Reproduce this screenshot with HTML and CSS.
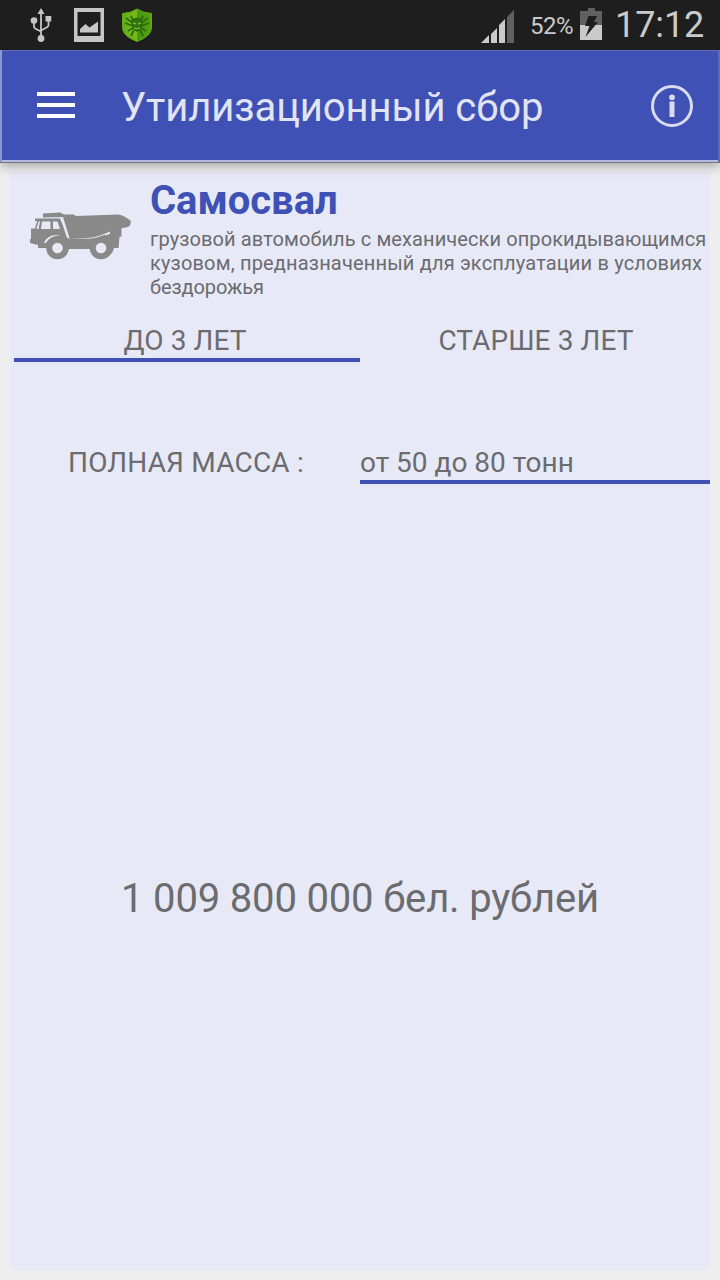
FILE: index.html
```html
<!DOCTYPE html>
<html lang="ru">
<head>
<meta charset="utf-8">
<title>Утилизационный сбор</title>
<link rel="stylesheet" href="styles.css">
</head>
<body>
<div class="screen">
  <header class="status">
    <div class="notifications">
      <svg width="22" height="34" viewBox="0 0 22 34" fill="#c6c6c6" stroke="#c6c6c6">
        <path d="M11 0l3.500 6h-7z" stroke="none"/>
        <path d="M11 4v27M4 13v5.500q0 1.500 1.500 2.300L11 23.500M18.500 11v6q0 1.500-1.500 2.300L11 22.500" fill="none" stroke-width="1.800"/>
        <circle cx="4" cy="12.500" r="3.300" stroke="none"/>
        <rect x="15.500" y="8" width="5.800" height="5.500" stroke="none"/>
        <circle cx="11" cy="30.500" r="3.400" stroke="none"/>
      </svg>
      <svg width="30" height="34" viewBox="0 0 30 34">
        <path fill="#c6c6c6" fill-rule="evenodd" d="M0 0h30v34H0zM3.500 4v24h23V4z"/>
        <path fill="#c6c6c6" d="M6 24.500V21l5.500-5 4 3.500 8.500-6v11z"/>
      </svg>
      <svg width="32" height="34" viewBox="0 0 32 34">
        <defs><linearGradient id="shield" x2="1"><stop stop-color="#5fae16"/><stop offset=".5" stop-color="#78bd18"/><stop offset=".52" stop-color="#459411"/><stop offset="1" stop-color="#54a413"/></linearGradient></defs>
        <path fill="url(#shield)" stroke="#61ad17" d="M16 1Q22 5 30.500 5.500v14q0 8.500-14.500 14Q1.500 28 1.500 19.500v-14Q10 5 16 1z"/>
        <g fill="none" stroke="#2d6a0c" stroke-width="1.700">
          <path d="M10 8l2 4M5 10l7 5M4 15l8 3M7 23l5-3M10 28l3-6M22 8l-2 4M27 10l-7 5M28 15l-8 3M25 23l-5-3M22 28l-3-6"/>
          <path d="M11 13q5-5 10 0l-1 7-4 3-4-3z" fill="#347510"/>
        </g>
        <path fill="none" stroke="#8dc73a" stroke-width="1.200" d="M12 15l3 1M20 15l-3 1M13 20q3 1.500 6 0"/>
      </svg>
    </div>
    <div class="system">
      <svg class="signal" width="34" height="33" viewBox="0 0 34 33">
        <path fill="#cacaca" d="M0 33l8-8v8zM10 24l6-6v15h-6zM18 15l6-6v24h-6z"/>
        <path fill="#606060" d="M26 7l7-7v33h-7z"/>
      </svg>
      <span class="percent">52%</span>
      <svg class="battery" width="22" height="32" viewBox="0 0 22 32">
        <path fill="#606060" d="M8 0h7v3h7v14H0V3h8z"/>
        <path fill="#cacaca" d="M0 17h22v15H0z"/>
        <path fill="#1e1e1e" d="M8.500 8H17l-3 6h4L5.500 29 9.500 18H5z"/>
      </svg>
      <time class="clock">17:12</time>
    </div>
  </header>
  <nav class="appbar">
    <span class="menu"><i></i><i></i><i></i></span>
    <h1 class="heading">Утилизационный сбор</h1>
    <svg class="info" width="42" height="42" viewBox="0 0 42 42">
      <circle cx="21" cy="21" r="19.500" fill="none" stroke="#d9dcf0" stroke-width="3"/>
      <circle cx="21" cy="12.300" r="2.900" fill="#d9dcf0"/>
      <path fill="#d9dcf0" d="M18.500 16.500h5V32h-5z"/>
    </svg>
  </nav>
  <main class="content">
    <section class="panel">
      <div class="vehicle">
        <svg class="truck" width="102" height="48" viewBox="0 0 102 48">
          <path fill="#898989" d="M13 1.500L30 .5l4 2h10l2 1.500L88 2.500q5 0 13 6.500l-1 4.500q-2 2-8.500 2.500v8.500l-2 .5-1 11h-4.500a11 11 0 0 1-21.500 1H38.500a11 11 0 0 1-21.500-1H8v-3L0 31v-4h1V16.500h4L7 9H5V6.500h25L39 27l23-.500 18-5.500v-1L64 25.500 39.500 27 33 5 13 5.500z"/>
          <path fill="#e7eaf6" d="M8.500 9.500h1.500L8.500 17H6.500zM12 9.500h8.500V17h-9.500zM23 9.500h4.500L30 17h-7zM30.500 6H33l6.500 20H37zM14 31q3-8 13-8l3 .5q-10 0-14 7.500zM60 26q12-2 20-6.500v2.500q-3 .7-4 1.200-4-1-8 2.300z"/>
          <circle cx="27.500" cy="36" r="11.300" fill="#898989"/><circle cx="71" cy="36" r="11.300" fill="#898989"/>
          <circle cx="27.500" cy="36" r="5.300" fill="#e7eaf6"/><circle cx="71" cy="36" r="5.300" fill="#e7eaf6"/>
        </svg>
        <div class="about">
          <h2 class="name">Самосвал</h2>
          <p class="description">грузовой автомобиль с механически опрокидывающимся<br><span class="wide">кузовом, предназначенный для эксплуатации в условиях</span><br><span class="tight">бездорожья</span></p>
        </div>
      </div>
      <div class="tabs">
        <span class="tab selected">ДО 3 ЛЕТ</span>
        <span class="tab older">СТАРШЕ 3 ЛЕТ</span>
      </div>
      <div class="mass">
        <span class="label">ПОЛНАЯ МАССА :</span>
        <span class="value">от 50 до 80 тонн</span>
      </div>
      <div class="total"><span>1 009 800 000 бел. рублей</span></div>
    </section>
  </main>
</div>
</body>
</html>
```
FILE: styles.css
```css
* { box-sizing: border-box; }
body { margin: 0; font-family: Roboto, "Noto Sans", sans-serif; color: #6b6b70; }
h1, h2, p { margin: 0; }
svg { display: block; flex: none; }
.screen { width: 720px; height: 1280px; display: flex; flex-direction: column; overflow: hidden; background: #eee; }
.status { position: relative; z-index: 2; height: 50px; flex: none; display: flex; justify-content: space-between; background: #1e1e1e; color: #cacaca; white-space: nowrap; }
.notifications { display: flex; gap: 17px; padding: 8px 0 0 30px; }
.notifications svg:first-child { margin-right: 5px; }
.system { display: flex; align-items: flex-start; padding-right: 15px; }
.signal { margin-top: 10px; }
.percent { width: 44px; margin: 11px 6px 0 15px; font-size: 24px; line-height: 30px; letter-spacing: -.5px; }
.battery { margin-top: 8px; }
.clock { width: 90px; margin: 3px 0 0 13px; font-size: 36px; line-height: 44px; letter-spacing: -.1px; }
.appbar { position: relative; height: 112px; flex: none; display: flex; align-items: center; padding: 0 27px 0 37px; background: #3f51b5; box-shadow: inset 2px 0 #8e98d3, inset -2px 0 #5d6bc0, inset 0 1px #5d6bc0, inset 0 -2px #b5bce2, 0 1px #77777a, 0 3px 12px #999; }
.menu { width: 38px; margin-top: -2px; display: grid; gap: 7px; }
.menu i { height: 4px; background: #fff; }
.heading { margin: 3px auto 0 46px; font-size: 40px; line-height: 48px; font-weight: 400; letter-spacing: -.08px; color: #e1e4f4; white-space: nowrap; }
.content { flex: 1; padding: 10px; }
.panel { height: 1098px; padding-top: 4px; background: #e7eaf6; }
.vehicle { height: 136px; display: flex; padding-left: 20px; }
.truck { margin-top: 36px; }
.about { margin-left: 18px; white-space: nowrap; }
.name { margin-top: 1px; font-size: 40px; line-height: 48px; font-weight: 700; letter-spacing: -.05px; color: #3f51b5; }
.description { margin-top: 2px; font-size: 20px; line-height: 24px; letter-spacing: .1px; }
.wide { letter-spacing: .17px; }
.tight { letter-spacing: -.1px; }
.tabs { display: grid; grid-template-columns: 346px 1fr; padding-left: 4px; height: 50px; font-size: 28px; line-height: 34px; text-align: center; letter-spacing: .1px; }
.tab { padding-top: 12px; }
.selected { padding-right: 4px; border-bottom: 4px solid #3f51b5; }
.older { padding-left: 2px; }
.mass { height: 38px; margin-top: 84px; display: grid; grid-template-columns: 350px 350px; font-size: 28px; line-height: 34px; }
.label { padding-left: 58px; letter-spacing: .2px; }
.value { border-bottom: 4px solid #3f51b5; }
.total { height: 786px; padding-top: 391px; font-size: 40px; line-height: 48px; text-align: center; letter-spacing: -.17px; }
```
